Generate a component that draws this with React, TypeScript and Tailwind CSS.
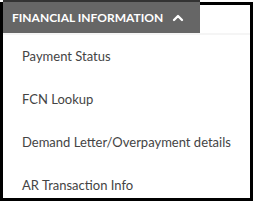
import { ChevronUp } from 'lucide-react';

const items = ['Payment Status', 'FCN Lookup', 'Demand Letter/Overpayment details', 'AR Transaction Info'];

export default function App() {
  return (
    <div className="h-[201px] w-[253px] bg-white pt-[2px]" style={{ fontFamily: 'Lato, "Open Sans", sans-serif' }}>
      <div className="h-[199px] border-[3px] border-black bg-white">
        <div className="-mt-[5px] flex h-[33px] w-[197px] items-center gap-[7px] border-t-2 border-[#333] bg-[#666] pl-[9px]">
          <span className="text-[12px] font-bold text-white">FINANCIAL INFORMATION</span>
          <ChevronUp className="h-4 w-4 text-white" strokeWidth={3.5} />
        </div>
        <div className="h-[2px] bg-[#f5f5f5]" />
        <ul className="flex flex-col pl-[19px] text-[13px] text-[#444]">
          {items.map((item) => (
            <li key={item} className="flex h-[43px] shrink-0 items-center">
              {item}
            </li>
          ))}
        </ul>
      </div>
    </div>
  );
}
